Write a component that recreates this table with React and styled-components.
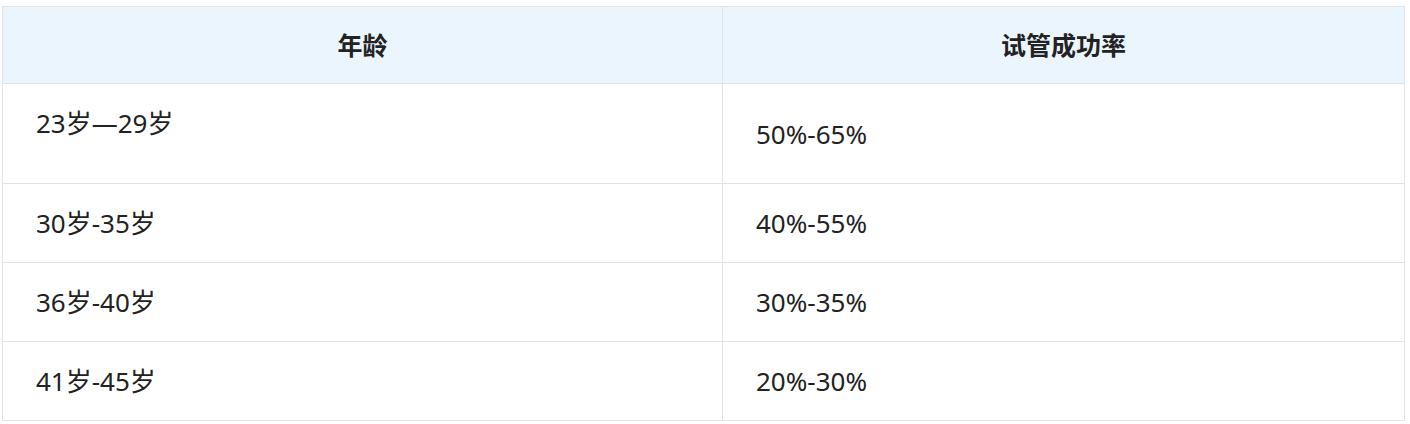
import React from 'react';
import styled, { createGlobalStyle } from 'styled-components';

const GlobalStyle = createGlobalStyle`
  body {
    margin: 0;
    background: #ffffff;
    font-family: "Noto Sans", "Noto Sans CJK SC", sans-serif;
  }
`;

const Page = styled.div`
  padding: 6px 5px 0 2px;
`;

const Table = styled.table`
  width: 100%;
  border-collapse: collapse;
  table-layout: fixed;
  border: 1px solid #e3e3e3;
  color: #222222;
  font-size: 26px;
  line-height: 28px;
`;

const HeadCell = styled.th`
  box-sizing: border-box;
  width: ${props => props.width || 'auto'};
  background: #ebf5fe;
  border: 1px solid #e3e3e3;
  padding: 24px 10px;
  font-size: 25px;
  font-weight: 700;
  text-align: center;
  height: 77px;
`;

const Cell = styled.td`
  border: 1px solid #e3e3e3;
  padding: 25px 33px ${props => props.extraBottom ? 25 + props.extraBottom : 25}px;
  vertical-align: ${props => props.align || 'middle'};
  text-align: left;
`;

const rows = [
  { age: '23岁—29岁', rate: '50%-65%', top: true },
  { age: '30岁-35岁', rate: '40%-55%' },
  { age: '36岁-40岁', rate: '30%-35%' },
  { age: '41岁-45岁', rate: '20%-30%' },
];

export default function App() {
  return (
    <Page>
      <GlobalStyle />
      <Table>
        <thead>
          <tr>
            <HeadCell width="720px">年龄</HeadCell>
            <HeadCell>试管成功率</HeadCell>
          </tr>
        </thead>
        <tbody>
          {rows.map(row => (
            <tr key={row.age}>
              <Cell align={row.top ? 'top' : 'middle'} extraBottom={row.top ? 21 : 0}>
                {row.age}
              </Cell>
              <Cell>{row.rate}</Cell>
            </tr>
          ))}
        </tbody>
      </Table>
    </Page>
  );
}
